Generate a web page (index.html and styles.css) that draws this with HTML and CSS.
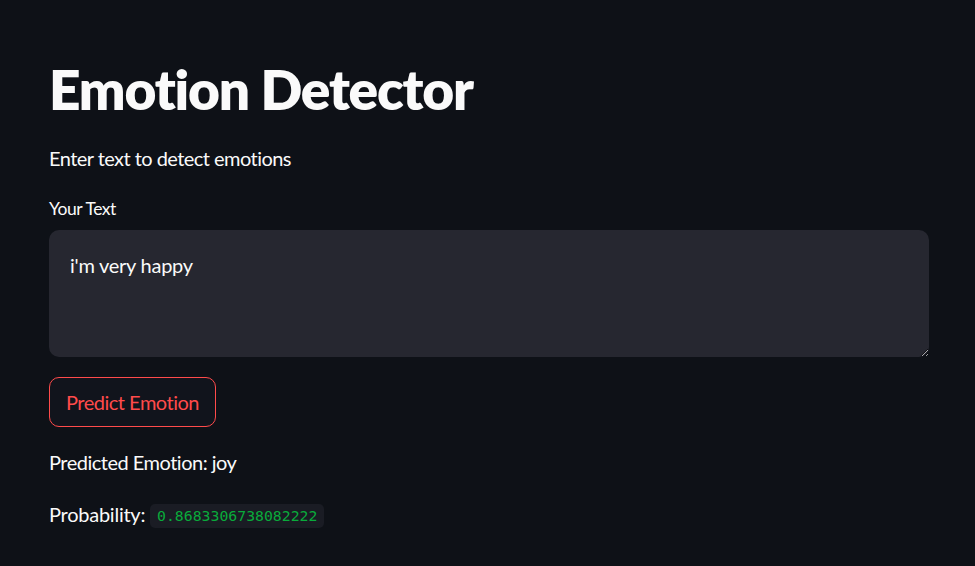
FILE: index.html
```html
<!DOCTYPE html>
<html>
<head>
<meta charset="utf-8">
<link rel="stylesheet" href="styles.css">
</head>
<body>
<main class="app">
  <h1 class="title">Emotion Detector</h1>
  <p class="intro">Enter text to detect emotions</p>
  <label class="label" for="txt">Your Text</label>
  <textarea id="txt" class="input">i'm very happy</textarea>
  <button class="btn">Predict Emotion</button>
  <p class="result">Predicted Emotion: joy</p>
  <p class="result prob">Probability: <code class="code">0.8683306738082222</code></p>
</main>
</body>
</html>
```
FILE: styles.css
```css
html, body {
  margin: 0;
  padding: 0;
  background: #0e1117;
  color: #fafafa;
  font-family: "Lato", "Open Sans", sans-serif;
  height: 100%;
  overflow: hidden;
}
.app {
  display: flex;
  flex-direction: column;
  align-items: flex-start;
  width: 880px;
  padding-left: 49px;
}
.title {
  margin: 56px 0 0 0;
  font-size: 55px;
  line-height: 66px;
  font-weight: 800;
  letter-spacing: -1.2px;
}
.intro {
  margin: 20px 0 0 0;
  font-size: 20px;
  line-height: 32px;
  letter-spacing: -0.55px;
}
.label {
  margin-top: 21px;
  font-size: 17.5px;
  line-height: 28px;
  letter-spacing: -0.45px;
}
.input {
  margin-top: 7px;
  box-sizing: border-box;
  width: 880px;
  height: 127px;
  background: #262730;
  color: #fafafa;
  border: none;
  border-radius: 10px;
  padding: 19px 21px;
  font-family: inherit;
  font-size: 20px;
  line-height: 32px;
  letter-spacing: -0.25px;
  resize: vertical;
  outline: none;
}
.btn {
  margin-top: 20px;
  box-sizing: border-box;
  width: 167px;
  height: 50px;
  background: #11141c;
  color: #ff4b4b;
  border: 1px solid #ff4b4b;
  border-radius: 10px;
  font-family: inherit;
  font-size: 20px;
  letter-spacing: -0.5px;
  padding: 0;
}
.result {
  margin: 19px 0 0 0;
  font-size: 20px;
  line-height: 32px;
  letter-spacing: -0.5px;
}
.prob {
  margin-top: 20px;
  letter-spacing: -0.25px;
}
.code {
  display: inline-block;
  background: #1a1c24;
  color: #09ab3b;
  font-family: "DejaVu Sans Mono", monospace;
  font-size: 14.8px;
  line-height: 24px;
  letter-spacing: 0;
  padding: 0 7px;
  border-radius: 5px;
  vertical-align: 1px;
}
```
